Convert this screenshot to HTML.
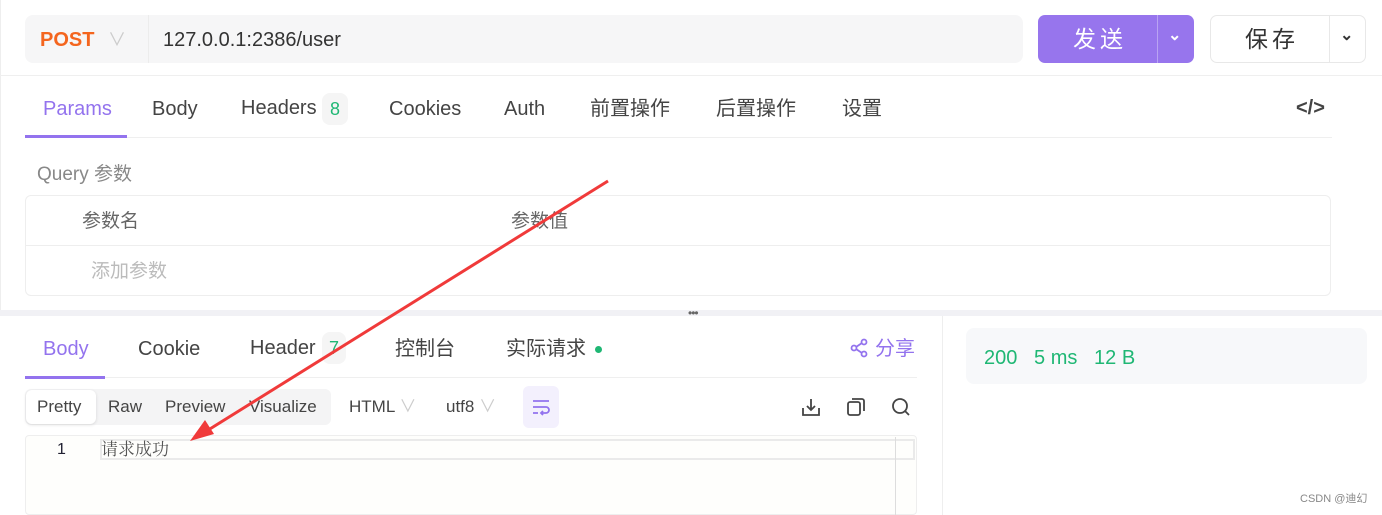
<!DOCTYPE html>
<html><head><meta charset="utf-8"><style>
*{box-sizing:border-box;margin:0;padding:0}
body{width:1382px;height:515px;background:#fff;font-family:"Liberation Sans","Noto Sans CJK SC",sans-serif;position:relative;overflow:hidden;color:#444;line-height:24px}
.a{position:absolute;white-space:nowrap;line-height:24px}
</style></head><body>
<div class="a" style="left:0;top:0;width:1px;height:310px;background:#eee"></div>
<div class="a" style="left:25px;top:15px;width:998px;height:48px;background:#f6f6f7;border-radius:8px"></div>
<div class="a" style="left:148px;top:15px;width:1px;height:48px;background:#ececec"></div>
<div class="a" style="left:40px;top:28px;font-size:20px;font-weight:bold;color:#f4651e">POST</div>
<div class="a" style="left:108px;top:28px;font-size:18px;color:#ccc">∨</div>
<div class="a" style="left:163px;top:28px;font-size:20px;color:#333">127.0.0.1:2386/user</div>
<div class="a" style="left:1038px;top:15px;width:156px;height:48px;background:#9775ed;border-radius:7px"></div>
<div class="a" style="left:1157px;top:15px;width:1px;height:48px;background:#b9a3f3"></div>
<div class="a" style="left:1073px;top:27px;font-size:23px;color:#fff;letter-spacing:4px">发送</div>
<div class="a" style="left:1168px;top:24px;font-size:16px;color:#fff;font-weight:bold">⌄</div>
<div class="a" style="left:1210px;top:15px;width:156px;height:48px;border:1px solid #e8e8e8;border-radius:7px"></div>
<div class="a" style="left:1329px;top:15px;width:1px;height:48px;background:#e8e8e8"></div>
<div class="a" style="left:1245px;top:27px;font-size:23px;color:#333;letter-spacing:4px">保存</div>
<div class="a" style="left:1340px;top:24px;font-size:16px;color:#333;font-weight:bold">⌄</div>
<div class="a" style="left:0;top:75px;width:1382px;height:1px;background:#efefef"></div>
<div class="a" style="top:97px;font-size:20px;left:43px;color:#9373ee">Params</div>
<div class="a" style="top:97px;font-size:20px;left:152px">Body</div>
<div class="a" style="top:96px;font-size:20px;left:241px">Headers</div>
<div class="a" style="left:322px;top:93px;width:26px;height:32px;background:#f5f5f5;border-radius:8px;font-size:18px;color:#1fb774;text-align:center;line-height:32px">8</div>
<div class="a" style="top:97px;font-size:20px;left:389px">Cookies</div>
<div class="a" style="top:97px;font-size:20px;left:504px">Auth</div>
<div class="a" style="top:97px;font-size:20px;left:590px">前置操作</div>
<div class="a" style="top:97px;font-size:20px;left:716px">后置操作</div>
<div class="a" style="top:97px;font-size:20px;left:842px">设置</div>
<div class="a" style="top:96px;font-size:20px;left:1296px;font-weight:bold;color:#444">&lt;/&gt;</div>
<div class="a" style="left:25px;top:137px;width:1307px;height:1px;background:#efefef"></div>
<div class="a" style="left:25px;top:135px;width:102px;height:3px;background:#9373ee"></div>
<div class="a" style="left:37px;top:163px;font-size:19px;color:#888">Query 参数</div>
<div class="a" style="left:25px;top:195px;width:1306px;height:101px;border:1px solid #eee;border-radius:6px"></div>
<div class="a" style="left:25px;top:245px;width:1306px;height:1px;background:#eee"></div>
<div class="a" style="left:82px;top:210px;font-size:19px;color:#666">参数名</div>
<div class="a" style="left:511px;top:210px;font-size:19px;color:#666">参数值</div>
<div class="a" style="left:91px;top:260px;font-size:19px;color:#bbb">添加参数</div>
<div class="a" style="left:0;top:310px;width:1382px;height:6px;background:#f1f1f5"></div>
<div class="a" style="left:688px;top:301px;font-size:12px;color:#666;letter-spacing:-1px">•••</div>
<div class="a" style="left:942px;top:316px;width:1px;height:199px;background:#eee"></div>
<div class="a" style="top:337px;font-size:20px;left:43px;color:#9373ee">Body</div>
<div class="a" style="top:337px;font-size:20px;left:138px">Cookie</div>
<div class="a" style="top:336px;font-size:20px;left:250px">Header</div>
<div class="a" style="left:322px;top:332px;width:24px;height:32px;background:#f5f5f5;border-radius:8px;font-size:18px;color:#1fb774;text-align:center;line-height:32px">7</div>
<div class="a" style="top:337px;font-size:20px;left:395px">控制台</div>
<div class="a" style="top:337px;font-size:20px;left:506px">实际请求</div>
<div class="a" style="left:595px;top:346px;width:7px;height:7px;border-radius:50%;background:#1fb774"></div>
<svg class="a" style="left:850px;top:338px" width="20" height="20" viewBox="0 0 20 20" fill="none" stroke="#9373ee" stroke-width="1.8"><circle cx="14" cy="4" r="2.5"/><circle cx="4" cy="10" r="2.5"/><circle cx="14" cy="16" r="2.5"/><path d="M6 9l6-4M6 11l6 4"/></svg>
<div class="a" style="top:337px;font-size:20px;left:875px;color:#9373ee">分享</div>
<div class="a" style="left:25px;top:377px;width:892px;height:1px;background:#efefef"></div>
<div class="a" style="left:25px;top:376px;width:80px;height:3px;background:#9373ee"></div>
<div class="a" style="left:25px;top:389px;width:306px;height:36px;background:#f4f4f5;border-radius:6px"></div>
<div class="a" style="left:26px;top:390px;width:70px;height:34px;background:#fff;border-radius:6px;box-shadow:0 1px 3px rgba(0,0,0,.12)"></div>
<div class="a" style="top:395px;font-size:17px;left:37px">Pretty</div>
<div class="a" style="top:395px;font-size:17px;left:108px">Raw</div>
<div class="a" style="top:395px;font-size:17px;left:165px">Preview</div>
<div class="a" style="top:395px;font-size:17px;left:249px">Visualize</div>
<div class="a" style="top:395px;font-size:17px;left:349px">HTML <span style="color:#ccc">∨</span></div>
<div class="a" style="top:395px;font-size:17px;left:446px">utf8 <span style="color:#ccc">∨</span></div>
<div class="a" style="left:523px;top:386px;width:36px;height:42px;background:#f3f0fd;border-radius:6px"></div>
<svg class="a" style="left:531px;top:397px" width="20" height="20" viewBox="0 0 20 20" fill="none" stroke="#9373ee" stroke-width="1.8"><path d="M2 4h16M2 10h13a3 3 0 010 6h-4M2 16h5M12 14l-2 2 2 2"/></svg>
<svg class="a" style="left:800px;top:396px" width="22" height="22" viewBox="0 0 22 22" fill="none" stroke="#444" stroke-width="1.8"><path d="M11 3v11M7 10l4 4 4-4M3 12v7h16v-7"/></svg>
<svg class="a" style="left:845px;top:396px" width="22" height="22" viewBox="0 0 22 22" fill="none" stroke="#444" stroke-width="1.8"><rect x="3" y="6" width="12" height="13" rx="2"/><path d="M7 3h10a2 2 0 012 2v10"/></svg>
<svg class="a" style="left:890px;top:396px" width="22" height="22" viewBox="0 0 22 22" fill="none" stroke="#444" stroke-width="1.8"><circle cx="10" cy="10" r="7"/><path d="M15 15l4 4"/></svg>
<div class="a" style="left:25px;top:435px;width:892px;height:80px;background:#fefefc;border:1px solid #eee;border-radius:4px"></div>
<div class="a" style="left:100px;top:439px;width:815px;height:21px;border:2px solid #eaeaea"></div>
<div class="a" style="left:895px;top:437px;width:1px;height:78px;background:#ddd"></div>
<div class="a" style="left:57px;top:438px;font-size:16px;color:#223">1</div>
<div class="a" style="left:101px;top:436px;font-size:17px;color:#555;font-family:'Noto Serif CJK SC',serif">请求成功</div>
<div class="a" style="left:966px;top:328px;width:401px;height:56px;background:#f7f8fa;border-radius:8px"></div>
<div class="a" style="left:984px;top:346px;font-size:20px;color:#1fb774">200&nbsp;&nbsp;&nbsp;5 ms&nbsp;&nbsp;&nbsp;12 B</div>
<div class="a" style="left:1300px;top:487px;font-size:11px;color:#888">CSDN @迪幻</div>
<svg class="a" style="left:0;top:0" width="1382" height="515"><line x1="608" y1="181" x2="205" y2="432" stroke="#f03a3a" stroke-width="3"/><polygon points="190,441 205,420 214,434" fill="#f03a3a"/></svg>
</body></html>
